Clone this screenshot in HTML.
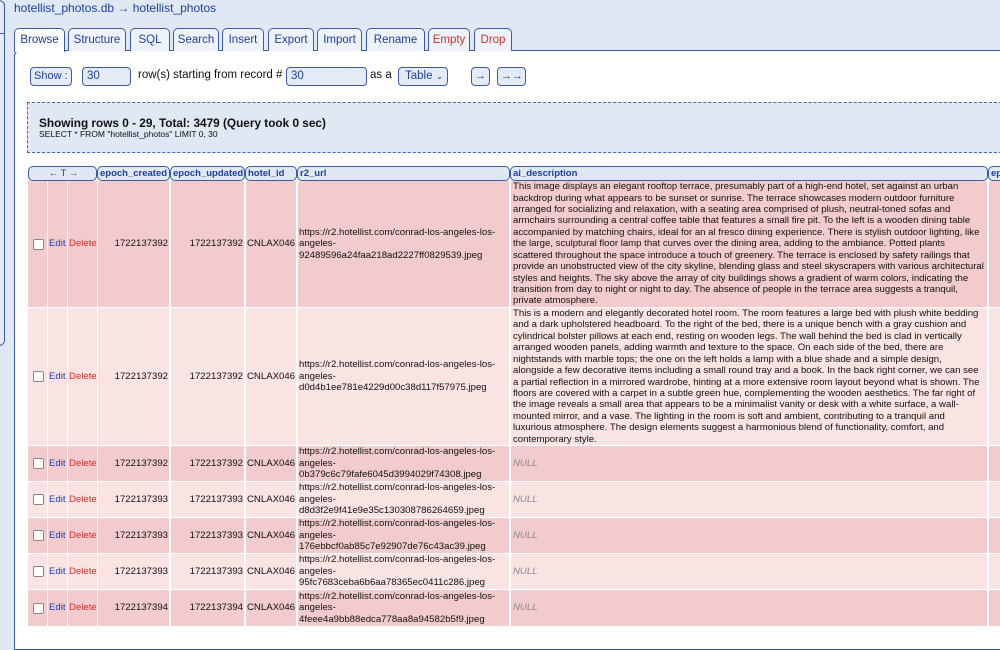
<!DOCTYPE html>
<html><head><meta charset="utf-8"><style>
*{margin:0;padding:0;box-sizing:border-box}
body{width:1000px;height:626px;overflow:hidden;background:#dfe8f3;font-family:"Liberation Sans",Arial,sans-serif;position:relative}
.a{position:absolute}
.title{left:14px;top:1px;font-size:12px;color:#1d3f9e;white-space:nowrap}
.side{left:-6px;top:0;width:11px;height:346px;border:1px solid #3c5aa8;border-radius:0 6px 6px 0;background:#e4ebf5}
.tab{position:absolute;top:28px;height:23px;border:1px solid #3c5aa8;border-bottom:none;border-radius:5px 5px 0 0;background:#eef3fa;font-size:11.5px;color:#1d3f9e;text-align:center;line-height:22px;white-space:nowrap}
.tab.red{color:#d0312d}
.panel{left:14px;top:50px;width:1000px;height:600px;border:1px solid #3c5aa8;border-right:none;border-radius:6px 0 0 0;background:#fff}
.btn{position:absolute;top:67px;height:19px;border:1px solid #3c5aa8;border-radius:4px;background:#e4ebf5;font-size:11.5px;color:#1d3f9e;line-height:17px;padding-left:4px;white-space:nowrap}
.lbl{position:absolute;top:69px;font-size:11.5px;color:#111;white-space:nowrap}
.box{left:27px;top:102px;width:990px;height:51px;border:1px dashed #4a65b0;background:#dfe8f3}
.hd{position:absolute;top:166px;height:15px;border:1px solid #3c5aa8;border-radius:5px;background:#dfe8f3;font-size:9.5px;font-weight:bold;color:#1d3f9e;line-height:13px;padding-left:2px;white-space:nowrap;overflow:hidden}
.c{position:absolute;font-size:9.6px;line-height:11.4px;color:#111;white-space:nowrap;display:flex;align-items:center;overflow:hidden}
.cb{width:11px;height:11px;border:1px solid #888;border-radius:2px;background:#fff}
</style></head><body>
<div class="a side"></div>
<div class="a" style="left:0;top:33px;width:5px;height:1px;background:#3c5aa8"></div>
<div class="a title">hotellist_photos.db → hotellist_photos</div>
<div class="a panel"></div>
<div class="tab" style="left:14px;width:51px;background:#fff;height:24px">Browse</div>
<div class="tab" style="left:68px;width:58px">Structure</div>
<div class="tab" style="left:130px;width:40px">SQL</div>
<div class="tab" style="left:173px;width:46px">Search</div>
<div class="tab" style="left:222px;width:42px">Insert</div>
<div class="tab" style="left:268px;width:46px">Export</div>
<div class="tab" style="left:317px;width:45px">Import</div>
<div class="tab" style="left:366px;width:59px">Rename</div>
<div class="tab red" style="left:428px;width:42px">Empty</div>
<div class="tab red" style="left:474px;width:38px">Drop</div>

<div class="btn" style="left:30px;width:42px;padding-left:3px;font-size:11px">Show :</div>
<div class="btn" style="left:82px;width:49px">30</div>
<div class="lbl" style="left:138px">row(s) starting from record #</div>
<div class="btn" style="left:286px;width:81px">30</div>
<div class="lbl" style="left:370px">as a</div>
<div class="btn" style="left:398px;width:50px;padding-left:6px">Table <span style="font-size:9px">⌄</span></div>
<div class="btn" style="left:471px;width:19px;padding-left:3px;font-size:11px">→</div>
<div class="btn" style="left:497px;width:29px;padding-left:3px;font-size:11px">→→</div>

<div class="a box"></div>
<div class="a" style="left:39px;top:116px;font-size:11.8px;font-weight:bold;color:#111;white-space:nowrap">Showing rows 0 - 29, Total: 3479 (Query took 0 sec)</div>
<div class="a" style="left:39px;top:129px;font-size:8.5px;color:#111;white-space:nowrap">SELECT * FROM "hotellist_photos" LIMIT 0, 30</div>

<div class="hd" style="left:28px;width:69px;text-align:center;font-weight:normal">← T →</div>
<div class="hd" style="left:97px;width:73px">epoch_created</div>
<div class="hd" style="left:170px;width:75px">epoch_updated</div>
<div class="hd" style="left:245px;width:52px">hotel_id</div>
<div class="hd" style="left:297px;width:213px">r2_url</div>
<div class="hd" style="left:510px;width:478px">ai_description</div>
<div class="hd" style="left:988px;width:30px">ep</div>

<div id="rows"></div>
<script>
var rows=[
[181,126,'1722137392','1722137392','92489596a24faa218ad2227ff0829539.jpeg',
'This image displays an elegant rooftop terrace, presumably part of a high-end hotel, set against an urban<br>backdrop during what appears to be sunset or sunrise. The terrace showcases modern outdoor furniture<br>arranged for socializing and relaxation, with a seating area comprised of plush, neutral-toned sofas and<br>armchairs surrounding a central coffee table that features a small fire pit. To the left is a wooden dining table<br>accompanied by matching chairs, ideal for an al fresco dining experience. There is stylish outdoor lighting, like<br>the large, sculptural floor lamp that curves over the dining area, adding to the ambiance. Potted plants<br>scattered throughout the space introduce a touch of greenery. The terrace is enclosed by safety railings that<br>provide an unobstructed view of the city skyline, blending glass and steel skyscrapers with various architectural<br>styles and heights. The sky above the array of city buildings shows a gradient of warm colors, indicating the<br>transition from day to night or night to day. The absence of people in the terrace area suggests a tranquil,<br>private atmosphere.'],
[308,137,'1722137392','1722137392','d0d4b1ee781e4229d00c38d117f57975.jpeg',
'This is a modern and elegantly decorated hotel room. The room features a large bed with plush white bedding<br>and a dark upholstered headboard. To the right of the bed, there is a unique bench with a gray cushion and<br>cylindrical bolster pillows at each end, resting on wooden legs. The wall behind the bed is clad in vertically<br>arranged wooden panels, adding warmth and texture to the space. On each side of the bed, there are<br>nightstands with marble tops; the one on the left holds a lamp with a blue shade and a simple design,<br>alongside a few decorative items including a small round tray and a book. In the back right corner, we can see<br>a partial reflection in a mirrored wardrobe, hinting at a more extensive room layout beyond what is shown. The<br>floors are covered with a carpet in a subtle green hue, complementing the wooden aesthetics. The far right of<br>the image reveals a small area that appears to be a minimalist vanity or desk with a white surface, a wall-<br>mounted mirror, and a vase. The lighting in the room is soft and ambient, contributing to a tranquil and<br>luxurious atmosphere. The design elements suggest a harmonious blend of functionality, comfort, and<br>contemporary style.'],
[446,35,'1722137392','1722137392','0b379c6c79fafe6045d3994029f74308.jpeg',null],
[482,35,'1722137393','1722137393','d8d3f2e9f41e9e35c130308786264659.jpeg',null],
[518,35,'1722137393','1722137393','176ebbcf0ab85c7e92907de76c43ac39.jpeg',null],
[554,35,'1722137393','1722137393','95fc7683ceba6b6aa78365ec0411c286.jpeg',null],
[590,36,'1722137394','1722137394','4feee4a9bb88edca778aa8a94582b5f9.jpeg',null]];
var cols=[[28,19],[48,19],[68,29],[98,71],[171,73],[246,50],[298,211],[511,476],[989,30]];
var h='';
rows.forEach(function(r,i){
 var bg=i%2?'#f9e3e3':'#f2cccc';
 var t=r[0],ht=r[1];
 var cont=['<div class="cb"></div>','<span style="color:#1d3fb0">Edit</span>','<span style="color:#d0312d">Delete</span>',
 '<span style="margin-left:auto;margin-right:1px">'+r[2]+'</span>','<span style="margin-left:auto;margin-right:1px">'+r[3]+'</span>','CNLAX046',
 '<span>https://r2.hotellist.com/conrad-los-angeles-los-<br>angeles-<br>'+r[4]+'</span>',
 r[5]?'<span>'+r[5]+'</span>':'<span style="color:#888;font-style:italic">NULL</span>',''];
 cols.forEach(function(c,j){
  h+='<div class="c" style="left:'+c[0]+'px;top:'+t+'px;width:'+c[1]+'px;height:'+ht+'px;background:'+bg+';padding-left:'+(j==0?5:j==7?2:1)+'px">'+cont[j]+'</div>';
 });
});
document.getElementById('rows').innerHTML=h;
</script>
</body></html>
